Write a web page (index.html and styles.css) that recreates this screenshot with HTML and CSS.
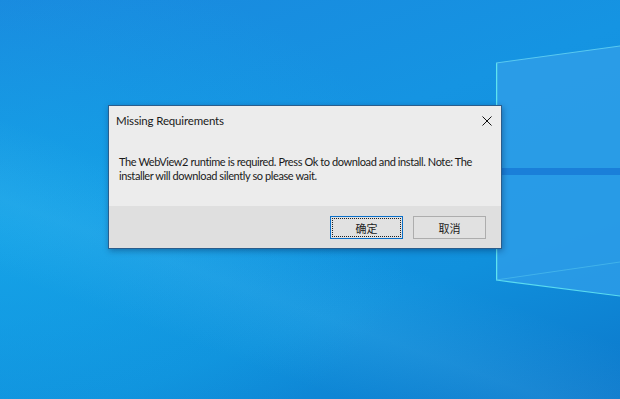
FILE: index.html
```html
<!DOCTYPE html>
<html lang="en">
<head>
    <meta charset="UTF-8">
    <title>Missing Requirements</title>
    <link rel="stylesheet" href="styles.css">
</head>
<body>

<div class="desktop">
    <!-- wallpaper logo -->
    <svg class="logo" width="124" height="260" viewBox="496 40 124 260">
        <polygon points="496,63 620,46 620,168 496,168" fill="#2e9de8" fill-opacity="0.85"/>
        <polygon points="496,175 620,175 620,296 496,280" fill="#2e9de8" fill-opacity="0.8"/>
        <rect x="496" y="168" width="124" height="7" fill="#1a7fd9"/>
        <line x1="496.5" y1="63" x2="496.5" y2="280" stroke="#5fe3ef" stroke-width="1.5"/>
        <line x1="496" y1="63" x2="620" y2="46" stroke="#59c9f0" stroke-width="1"/>
        <line x1="496" y1="280" x2="620" y2="296" stroke="#5adbf0" stroke-width="1.2"/>
        <line x1="496" y1="280" x2="620" y2="262" stroke="#55c6ee" stroke-width="0.8" stroke-opacity="0.7"/>
    </svg>

    <div class="dialog">
        <div class="titlebar">
            <span class="title">Missing Requirements</span>
            <svg class="close" width="10" height="10" viewBox="0 0 10 10">
                <path d="M0.5 0.5 L9.5 9.5 M9.5 0.5 L0.5 9.5" stroke="#111" stroke-width="1"/>
            </svg>
        </div>
        <div class="message">
            <div>The WebView2 runtime is required. Press Ok to download and install. Note: The</div>
            <div>installer will download silently so please wait.</div>
        </div>
        <div class="footer">
            <button class="btn btn-default"><span>确定</span></button>
            <button class="btn">取消</button>
        </div>
    </div>
</div>

</body>
</html>
```

FILE: styles.css
```css
body {
    margin: 0;
    width: 620px;
    height: 399px;
    overflow: hidden;
    font-family: Lato, "Noto Sans CJK SC", sans-serif;
}
.desktop {
    position: relative;
    width: 620px;
    height: 399px;
    box-sizing: border-box;
    padding: 105px 0 0 108px;
    background:
        linear-gradient(200deg, rgba(255,255,255,0) 55%, rgba(120,210,250,0.12) 68%, rgba(255,255,255,0) 80%),
        radial-gradient(ellipse 420px 260px at 0% 55%, rgba(20,175,235,0.55), rgba(20,175,235,0) 100%),
        linear-gradient(160deg, #1a88de 0%, #1594e2 40%, #1090dc 70%, #0c78cb 100%);
}
.logo {
    position: absolute;
    left: 496px;
    top: 40px;
}
/* Win32 message box */
.dialog {
    position: relative;
    width: 394px;
    height: 144px;
    box-sizing: border-box;
    border: 1px solid #2a5d8c;
    background-color: #ececec;
    box-shadow: 1px 2px 6px rgba(0, 20, 60, 0.35);
    display: flex;
    flex-direction: column;
    color: #1a1a1a;
}
.titlebar {
    height: 29px;
    display: flex;
    align-items: center;
    justify-content: space-between;
    padding: 0 8px 1px 7px;
}
.title {
    font-size: 11.5px;
    letter-spacing: -0.15px;
}
.close {
    margin-right: 1px;
}
.message {
    flex: 1;
    padding: 19px 0 0 10px;
    line-height: 14px;
    font-size: 11px;
    letter-spacing: -0.4px;
    white-space: nowrap;
}
.footer {
    height: 42px;
    box-sizing: border-box;
    background-color: #dfdfdf;
    display: flex;
    justify-content: flex-end;
    align-items: flex-start;
    gap: 10px;
    padding: 10px 15px 0 0;
}
.btn {
    width: 73px;
    height: 23px;
    box-sizing: border-box;
    border: 1px solid #adadad;
    background-color: #e1e1e1;
    font-family: "Noto Sans CJK SC", sans-serif;
    font-size: 11px;
    color: #222;
    padding: 0;
    display: flex;
    align-items: center;
    justify-content: center;
}
.btn-default {
    border-color: #0a6fc8;
    padding: 1px;
}
.btn-default span {
    display: flex;
    align-items: center;
    justify-content: center;
    width: 100%;
    height: 100%;
    box-sizing: border-box;
    border: 1px dotted #222;
}
```
